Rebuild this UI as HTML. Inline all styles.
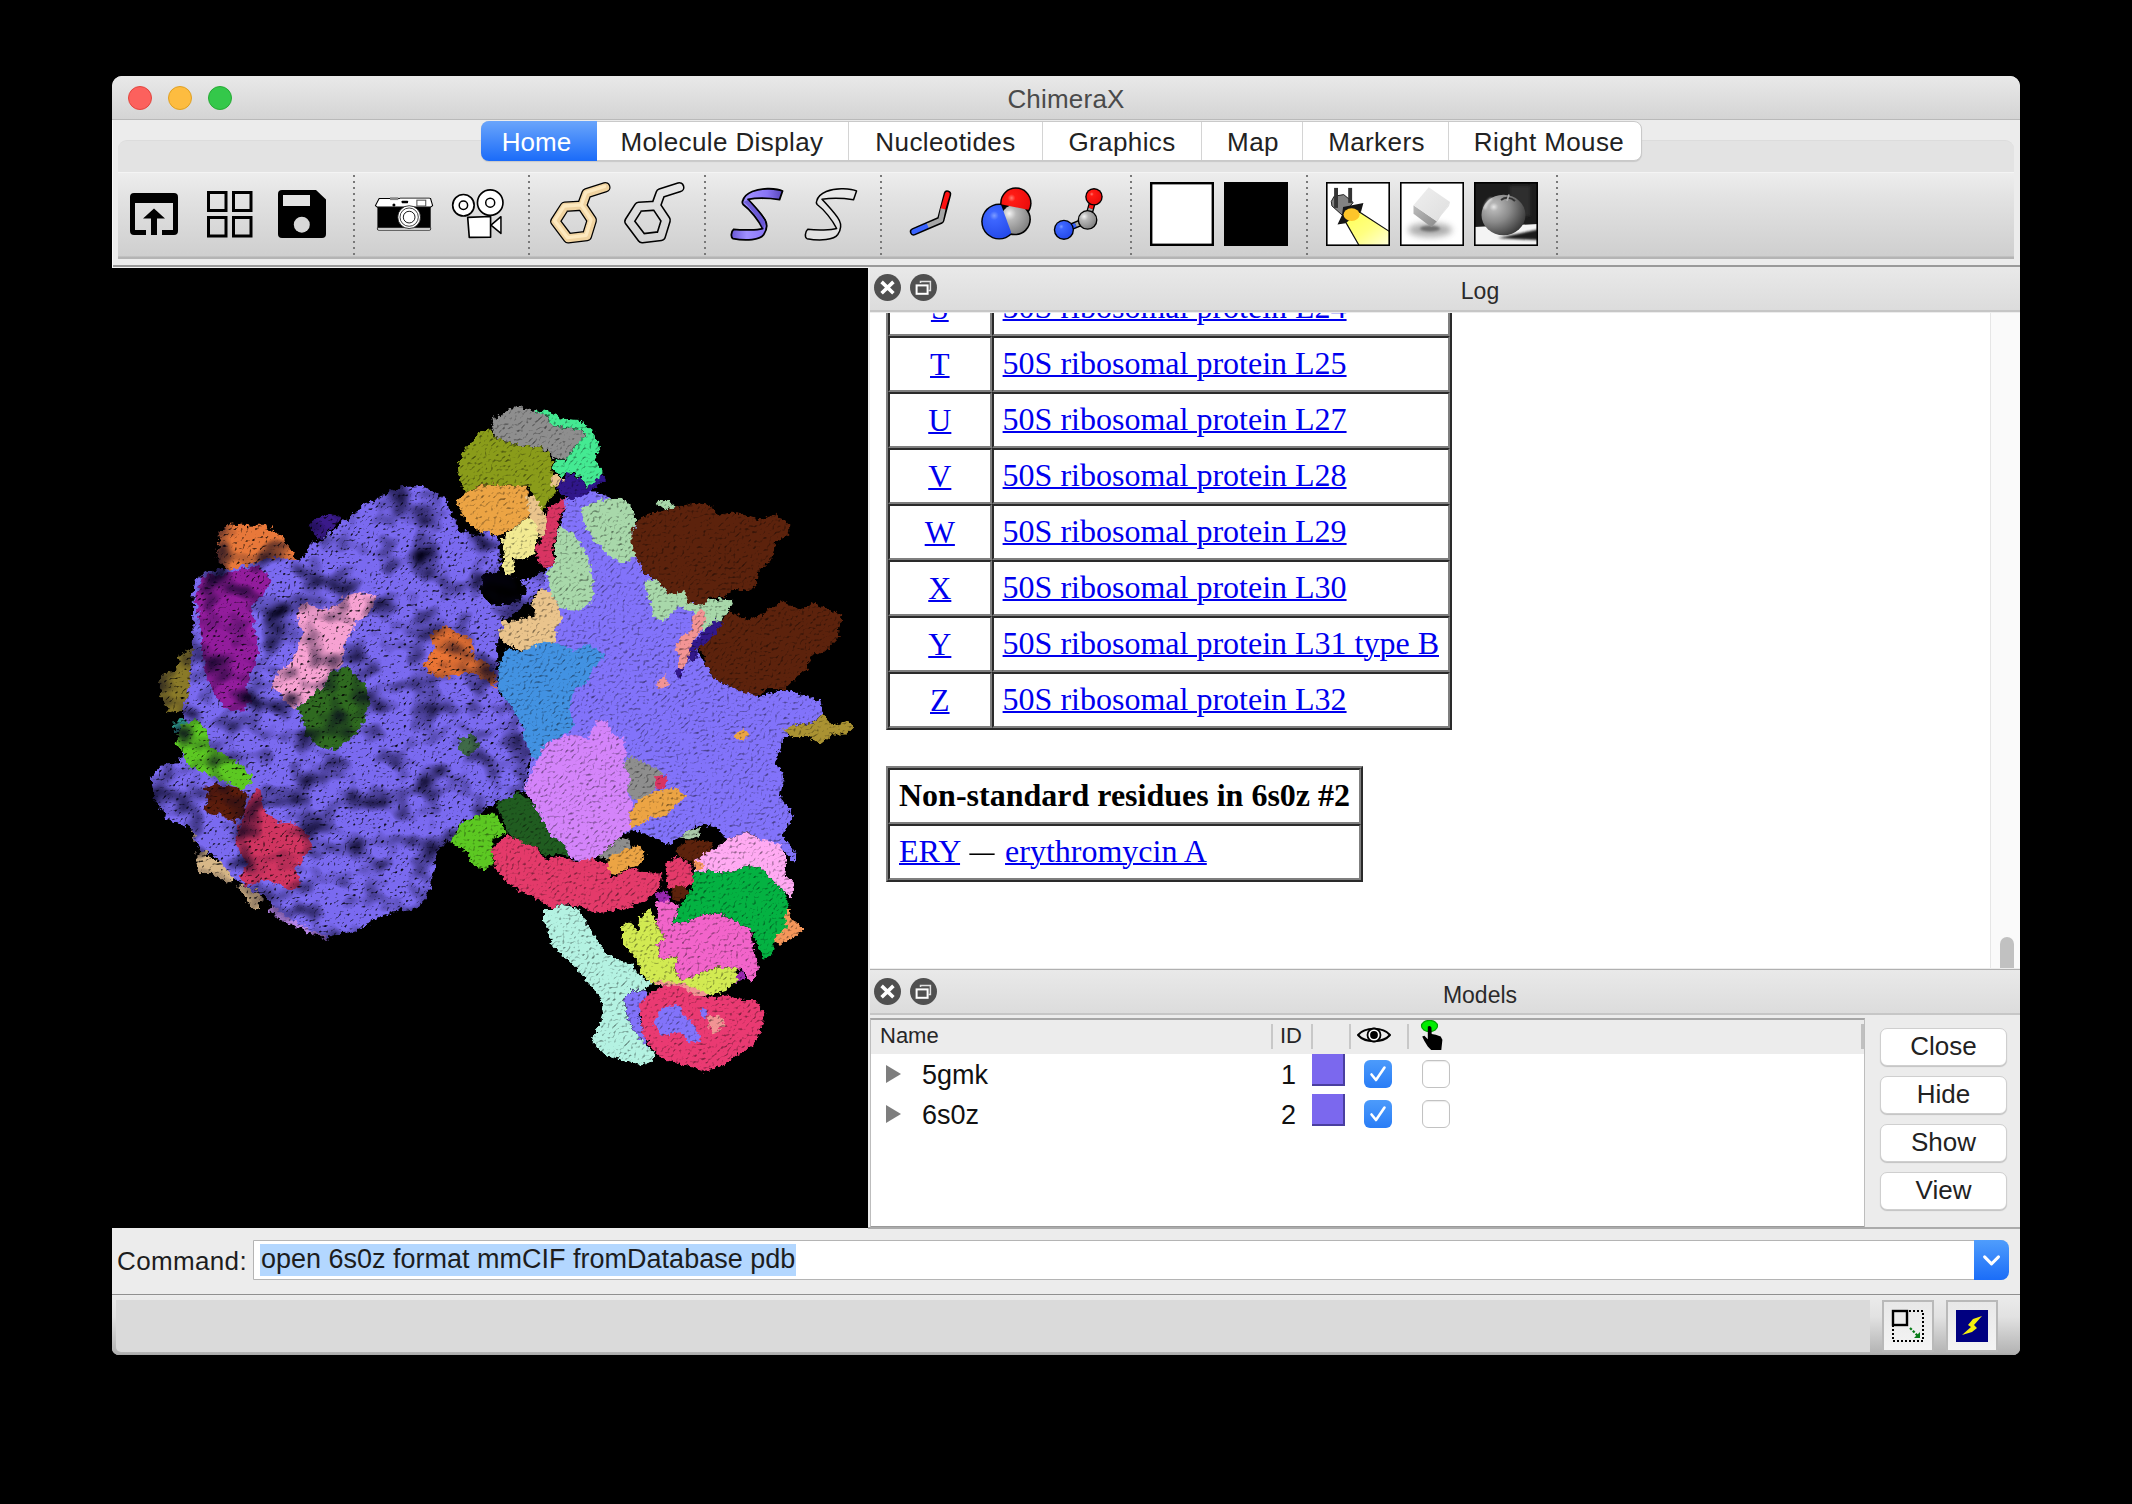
<!DOCTYPE html>
<html>
<head>
<meta charset="utf-8">
<title>ChimeraX</title>
<style>
svg{display:block}
*{box-sizing:border-box;margin:0;padding:0}
html,body{width:2132px;height:1504px;background:#000;overflow:hidden}
body{font-family:"Liberation Sans",sans-serif;position:relative;color:#1f1f1f}
.abs{position:absolute}
#win{position:absolute;left:112px;top:76px;width:1908px;height:1279px;background:#ececec;border-radius:10px 10px 7px 7px;overflow:hidden}
#titlebar{position:absolute;left:0;top:0;width:1908px;height:44px;background:linear-gradient(#e9e9e9,#d4d4d4);border-bottom:1px solid #b9b9b9}
#titlebar .t{position:absolute;left:0;width:1908px;top:8px;text-align:center;font-size:26px;color:#4a4a4a;letter-spacing:0.2px}
.tl{position:absolute;top:10px;width:24px;height:24px;border-radius:12px}
#tabpane{position:absolute;left:6px;top:64px;width:1896px;height:40px;background:#e3e3e3;border-radius:9px 9px 0 0;border-top:1px solid #dcdcdc}
#tabs{position:absolute;left:369px;top:45px;width:1161px;height:40px;background:#fff;border-radius:8px;border:1px solid #c9c9c9;box-shadow:0 1px 1px rgba(0,0,0,.12)}
.tab{position:absolute;top:0;height:38px;padding-top:1px;font-size:26px;letter-spacing:.4px;line-height:38px;text-align:center;color:#222;border-left:1px solid #d4d4d4;white-space:nowrap}
#toolbar{position:absolute;left:6px;top:96px;width:1896px;height:87px;background:linear-gradient(#ededed 0%,#e2e2e2 30%,#cfcfcf 96%,#b4b4b4 98%,#b4b4b4 100%);border-top:1px solid #f4f4f4}
.sep{position:absolute;top:2px;height:80px;width:2px;background:repeating-linear-gradient(#787878 0,#787878 2px,transparent 2px,transparent 6px)}
#gfx{position:absolute;left:0;top:192px;width:756px;height:960px;background:#000}
#right{position:absolute;left:758px;top:191px;width:1150px;height:962px;background:#ececec}
.dockbar{position:absolute;left:0;width:1150px;background:linear-gradient(#e9e9e9,#dcdcdc);border-bottom:2px solid #c6c6c6}
.dockbar .t{position:absolute;left:70px;width:1080px;text-align:center;font-size:23px;color:#2a2a2a}
.dbtn{position:absolute;width:27px;height:27px;border-radius:14px;background:#505050}
#log{position:absolute;left:0;top:46px;width:1150px;height:655px;background:#fff;overflow:hidden;font-family:"Liberation Serif",serif;font-size:32px;color:#000}
#log a{color:#0000ee;text-decoration:underline;text-decoration-thickness:2px}

#log table{position:absolute;border-collapse:separate;border-spacing:0;border:2px solid;border-color:#7f7f7f #2a2a2a #2a2a2a #7f7f7f;font-family:"Liberation Serif",serif;font-size:32px;color:#000;line-height:36px}
#log td,#log th{border:2px solid;border-color:#2a2a2a #7f7f7f #7f7f7f #2a2a2a;height:56px;padding:0 9px 2px 9px;white-space:nowrap;vertical-align:middle;text-align:left;font-size:32px}
#log td.c{text-align:center;padding:0}
#log th{font-weight:bold}
#sb{position:absolute;left:1120px;top:0;width:30px;height:655px;background:#fafafa;border-left:1px solid #e6e6e6}
#sb div{position:absolute;left:9px;top:624px;width:14px;height:40px;border-radius:7px;background:#c1c1c1}

#mtable{position:absolute;left:0px;top:751px;width:995px;height:210px;background:#fff;border:1px solid #bdbdbd;border-top:2px solid #a6a6a6;border-bottom:2px solid #9a9a9a;overflow:hidden}
#mhead{position:absolute;left:0;top:0;width:995px;height:34px;background:#ececec}
#mhead .h{position:absolute;top:3px;font-size:22px;color:#262626}
#mhead .v{position:absolute;top:4px;width:2px;height:25px;background:#c8c8c8}
.mrow{position:absolute;left:0;width:993px;height:40px;font-size:27px;color:#111}
.mrow .tri{position:absolute;left:15px;top:11px;width:0;height:0;border-left:15px solid #7e7e7e;border-top:9px solid transparent;border-bottom:9px solid transparent}
.mrow .n{position:absolute;left:51px;top:6px}
.mrow .i{position:absolute;left:410px;top:6px}
.mrow .sw{position:absolute;left:441px;top:0px;width:33px;height:32px;background:#7b68ee;border-right:2px solid #4a3fa0;border-bottom:2px solid #4a3fa0}
.cb{position:absolute;top:6px;width:28px;height:28px;border-radius:6px}
.cb.on{background:linear-gradient(#4c9bfb,#2a7df6)}
.cb.off{background:#fff;border:1px solid #c2c2c2;box-shadow:inset 0 1px 1px rgba(0,0,0,.08)}
.mbtn{position:absolute;left:1010px;width:127px;height:38px;background:#fff;border-radius:7px;border:1px solid #cfcfcf;box-shadow:0 1px 1px rgba(0,0,0,.18);font-size:26px;line-height:35px;text-align:center;color:#222}
#cmdlabel{position:absolute;left:5px;top:18px;font-size:26px;letter-spacing:.35px;color:#1d1d1d}
#cmdbox{position:absolute;left:141px;top:12px;width:1755px;height:40px;background:#fff;border:1px solid #b4b4b4;border-radius:0 7px 7px 0}
#cmdbox .sel{position:absolute;left:6px;top:3px;height:32px;background:#b3d7ff;font-size:27px;line-height:31px;color:#1d1d1d;white-space:nowrap;padding:0 1px}
#cmdbtn{position:absolute;left:1862px;top:12px;width:35px;height:40px;border-radius:0 8px 8px 0;background:linear-gradient(#4f9dfc,#1b6df8)}
#statusbar{position:absolute;left:4px;top:4px;width:1754px;height:52px;background:#dadada;border-radius:0 0 0 5px}
.sbtn{position:absolute;top:4px;width:52px;height:52px;background:linear-gradient(#e8e8e8,#f4f4f4);border:2px solid #b9b9b9}
#cmdrow{position:absolute;left:0;top:1152px;width:1908px;height:67px;background:#ececec;border-bottom:1px solid #8f8f8f}
#status{position:absolute;left:0;top:1220px;width:1908px;height:59px;background:linear-gradient(#ebebeb 0%,#e2e2e2 35%,#b4b4b4 96%,#a8a8a8 100%)}
</style>
</head>
<body>
<div id="win">
  <div class="abs" style="left:0;top:44px;width:1px;height:148px;background:#fafafa;z-index:5"></div>
  <div id="titlebar">
    <div class="tl" style="left:16px;background:#fc615d;border:1px solid #e2463f"></div>
    <div class="tl" style="left:56px;background:#fdbc40;border:1px solid #dfa023"></div>
    <div class="tl" style="left:96px;background:#34c84a;border:1px solid #27aa35"></div>
    <div class="t">ChimeraX</div>
  </div>
  <div id="tabpane"></div>
  <div id="tabs">
    <div class="tab" id="tabhome" style="left:-1px;width:116px;top:-1px;height:40px;line-height:40px;border-left:0;border-radius:8px 0 0 8px;background:linear-gradient(#6aa5fb,#1a6bf9);color:#fff;letter-spacing:0;padding-right:5px">Home</div>
    <div class="tab" style="left:114px;width:252px;border-left:0">Molecule Display</div>
    <div class="tab" style="left:366px;width:194px">Nucleotides</div>
    <div class="tab" style="left:560px;width:159px">Graphics</div>
    <div class="tab" style="left:719px;width:101px;padding-left:2px">Map</div>
    <div class="tab" style="left:820px;width:146px;padding-left:2px">Markers</div>
    <div class="tab" style="left:966px;width:193px;padding-left:8px">Right Mouse</div>
  </div>
  <div id="toolbar">
    <div class="sep" style="left:234.5px"></div>
    <div class="sep" style="left:410px"></div>
    <div class="sep" style="left:586px"></div>
    <div class="sep" style="left:762px"></div>
    <div class="sep" style="left:1012px"></div>
    <div class="sep" style="left:1188px"></div>
    <div class="sep" style="left:1438px"></div>
    
  </div>
<svg id="icons" style="position:absolute;left:-112px;top:-76px" width="2132" height="300" viewBox="0 0 2132 300">
<defs>
<linearGradient id="tbg" gradientUnits="userSpaceOnUse" x1="0" y1="172" x2="0" y2="258"><stop offset="0" stop-color="#ededed"/><stop offset=".3" stop-color="#e2e2e2"/><stop offset="1" stop-color="#cecece"/></linearGradient>
<linearGradient id="tbg2" gradientUnits="userSpaceOnUse" x1="0" y1="-53" x2="0" y2="1093"><stop offset="0" stop-color="#ededed"/><stop offset=".3" stop-color="#e2e2e2"/><stop offset="1" stop-color="#cecece"/></linearGradient>
<linearGradient id="purp" x1="0" y1="0" x2="1" y2="0"><stop offset="0" stop-color="#6a58d8"/><stop offset=".3" stop-color="#a090ff"/><stop offset=".7" stop-color="#8874f6"/><stop offset="1" stop-color="#5746b8"/></linearGradient>
<radialGradient id="gblue" cx=".35" cy=".32" r=".75"><stop offset="0" stop-color="#7d9dff"/><stop offset=".18" stop-color="#3d66ff"/><stop offset="1" stop-color="#2348e8"/></radialGradient>
<radialGradient id="gred" cx=".35" cy=".32" r=".75"><stop offset="0" stop-color="#ff7a70"/><stop offset=".18" stop-color="#ff1a14"/><stop offset="1" stop-color="#e80a0a"/></radialGradient>
<radialGradient id="ggray" cx=".3" cy=".3" r=".8"><stop offset="0" stop-color="#f4f4f4"/><stop offset=".3" stop-color="#b8b8b8"/><stop offset="1" stop-color="#7e7e7e"/></radialGradient>
<linearGradient id="beam" x1="0" y1="0" x2="1" y2="1"><stop offset="0" stop-color="#ffff55"/><stop offset=".5" stop-color="#ffff80"/><stop offset="1" stop-color="#ffffe0"/></linearGradient>
<linearGradient id="cubetop" x1="0" y1="0" x2="1" y2="1"><stop offset="0" stop-color="#efefef"/><stop offset="1" stop-color="#dedede"/></linearGradient>
<linearGradient id="cubeside" x1="0" y1="0" x2="1" y2="1"><stop offset="0" stop-color="#bdbdbd"/><stop offset="1" stop-color="#8a8a8a"/></linearGradient>
<radialGradient id="apple" cx=".28" cy=".3" r=".85"><stop offset="0" stop-color="#e6e6e6"/><stop offset=".12" stop-color="#b4b4b4"/><stop offset=".45" stop-color="#8a8a8a"/><stop offset=".8" stop-color="#4e4e4e"/><stop offset="1" stop-color="#2c2c2c"/></radialGradient>
<filter id="blur3" x="-50%" y="-50%" width="200%" height="200%"><feGaussianBlur stdDeviation="3"/></filter>
<filter id="blur1" x="-50%" y="-50%" width="200%" height="200%"><feGaussianBlur stdDeviation="1.2"/></filter>
<clipPath id="c64"><rect x="0" y="0" width="64" height="64"/></clipPath>
<clipPath id="clipred"><polygon points="970,100 1270,100 1270,308 985,250"/></clipPath>
<clipPath id="clipblue"><polygon points="790,230 985,250 1078,505 1060,600 790,600"/></clipPath>
</defs>
<!-- open -->
<g fill="#000">
<path d="M134 193 H174 a4 4 0 0 1 4 4 V231 a4 4 0 0 1 -4 4 H162 V230 H173 V203 H135 V230 H146 V235 H134 a4 4 0 0 1 -4 -4 V197 a4 4 0 0 1 4 -4 Z"/>
<path d="M154 208.5 L165 218.6 H157 V235 H151 V218.6 H143 Z"/>
</g>
<!-- grid -->
<g fill="none" stroke="#000" stroke-width="3">
<rect x="208.5" y="192.5" width="17.5" height="18"/><rect x="233.5" y="192.5" width="17.5" height="18"/>
<rect x="208.5" y="217.5" width="17.5" height="18.5"/><rect x="233.5" y="217.5" width="17.5" height="18.5"/>
</g>
<!-- save -->
<path d="M282 190 H316 L326 199.5 V234 a4 4 0 0 1 -4 4 H282 a4 4 0 0 1 -4 -4 V194 a4 4 0 0 1 4 -4 Z" fill="#000"/>
<rect x="283" y="195" width="27" height="11" fill="#e4e4e4"/>
<circle cx="301.8" cy="224.7" r="8" fill="#d8d8d8"/>
<!-- camera -->
<g transform="translate(360,176) scale(0.07505)">
<path d="M205 395 L255 300 L940 300 L968 395 L940 415 L230 415 Z" fill="#fff" stroke="#000" stroke-width="14" stroke-linejoin="round"/>
<rect x="400" y="283" width="110" height="38" fill="#8a8a8a"/>
<rect x="530" y="283" width="400" height="22" fill="#8a8a8a"/>
<rect x="232" y="415" width="710" height="275" fill="#000"/>
<path d="M232 690 H942 V705 a20 20 0 0 1 -20 20 H252 a20 20 0 0 1 -20 -20 Z" fill="#fff" stroke="#000" stroke-width="10"/>
<path d="M240 722 H935" stroke="#777" stroke-width="12"/>
<circle cx="452" cy="385" r="20" fill="#000"/>
<rect x="555" y="330" width="85" height="32" rx="8" fill="#000"/>
<rect x="758" y="322" width="118" height="78" fill="#fff" stroke="#555" stroke-width="14"/>
<circle cx="655" cy="548" r="152" fill="#fff" stroke="#000" stroke-width="10"/>
<circle cx="655" cy="548" r="122" fill="#fff" stroke="#000" stroke-width="10"/>
<circle cx="655" cy="548" r="78" fill="#fff" stroke="#000" stroke-width="12"/>
</g>
<!-- movie -->
<g transform="translate(360,176) scale(0.07505)" stroke="#000" fill="#fff">
<polygon points="1745,655 1878,542 1878,765" stroke-width="20" stroke-linejoin="round"/>
<polygon points="1435,552 1740,540 1740,815 1456,818" stroke-width="22" stroke-linejoin="round"/>
<circle cx="1378" cy="390" r="143" stroke-width="22"/>
<circle cx="1378" cy="390" r="56" stroke-width="20"/>
<circle cx="1735" cy="355" r="170" stroke-width="22"/>
<circle cx="1735" cy="355" r="60" stroke-width="20"/>
</g>
<!-- benzene tan -->
<g transform="translate(540,176) scale(0.07505)" fill="none" stroke-linejoin="round" stroke-linecap="round">
<path d="M560 395 L330 410 L205 605 L375 830 L625 800 L690 590 Z M560 395 L620 230 L870 150" stroke="#000" stroke-width="140"/>
<path d="M560 395 L330 410 L205 605 L375 830 L625 800 L690 590 Z M560 395 L620 230 L870 150" stroke="#f0d3a0" stroke-width="106"/>
<path d="M560 395 L330 410 L205 605 L375 830 L625 800 L690 590 Z M560 395 L620 230 L870 150" stroke="#ffecc4" stroke-width="44" opacity=".85" transform="translate(-10,-10)"/>
</g>
<!-- benzene outline -->
<g transform="translate(614,176) scale(0.07505)" fill="none" stroke-linejoin="round" stroke-linecap="round">
<path d="M560 395 L330 410 L205 605 L375 830 L625 800 L690 590 Z M560 395 L620 230 L870 150" stroke="#000" stroke-width="140"/>
</g>
<g transform="translate(614,176) scale(0.07505)" fill="none" stroke-linejoin="round" stroke-linecap="round">
<path d="M560 395 L330 410 L205 605 L375 830 L625 800 L690 590 Z M560 395 L620 230 L870 150" stroke="url(#tbg2)" stroke-width="98"/>
</g>
<!-- ribbon purple -->
<g transform="translate(715,176) scale(0.07505)">
<path id="rib" d="M370 330 C400 220 560 165 720 170 C800 172 870 185 900 200 L860 315 C760 300 560 290 440 310 C520 400 620 500 670 590 C700 650 690 720 650 780 C600 850 420 870 240 835 C205 820 215 740 250 710 C380 725 560 720 635 700 C580 590 470 450 375 380 C360 360 362 345 370 330 Z" fill="url(#purp)" stroke="#000" stroke-width="24" stroke-linejoin="round"/>
<path d="M385 345 C470 420 580 560 640 700 C660 680 670 640 660 600 C610 500 520 400 440 318 Z" fill="#5a48c4" opacity=".7"/>
<path d="M440 310 C520 400 620 500 670 590 C690 630 692 670 680 710" fill="none" stroke="#000" stroke-width="14"/>
</g>
<!-- ribbon outline -->
<g transform="translate(789,176) scale(0.07505)">
<path d="M370 330 C400 220 560 165 720 170 C800 172 870 185 900 200 L860 315 C760 300 560 290 440 310 C520 400 620 500 670 590 C700 650 690 720 650 780 C600 850 420 870 240 835 C205 820 215 740 250 710 C380 725 560 720 635 700 C580 590 470 450 375 380 C360 360 362 345 370 330 Z" fill="#ebebeb" fill-opacity=".55" stroke="#000" stroke-width="20" stroke-linejoin="round"/>
</g>
<!-- stick -->
<g transform="translate(890,176) scale(0.11257)" fill="none" stroke-linecap="round" stroke-linejoin="round">
<path d="M210 495 L450 392 L510 162" stroke="#000" stroke-width="68"/>
<path d="M210 495 L335 441" stroke="#3a64ff" stroke-width="42"/>
<path d="M470 295 L510 162" stroke="#ff1212" stroke-width="42"/>
<path d="M335 441 L450 392 L472 292" stroke="#a6a6a6" stroke-width="42" stroke-linecap="butt"/>
</g>
<!-- spheres -->
<g transform="translate(890,176) scale(0.11257)">
<circle cx="1118" cy="241" r="140" fill="#000"/><circle cx="970" cy="405" r="160" fill="#000"/><circle cx="1110" cy="385" r="142" fill="#000"/>
<circle cx="1110" cy="385" r="128" fill="url(#ggray)"/>
<g clip-path="url(#clipred)"><circle cx="1118" cy="241" r="127" fill="url(#gred)"/></g>
<g clip-path="url(#clipblue)"><circle cx="970" cy="405" r="147" fill="url(#gblue)"/></g>
</g>
<!-- ball stick -->
<g transform="translate(890,176) scale(0.11257)">
<path d="M1545 478 L1755 390 L1812 185" fill="none" stroke="#000" stroke-width="62"/>
<path d="M1545 478 L1650 434" stroke="#3a64ff" stroke-width="38"/><path d="M1650 434 L1755 390 L1783 288" stroke="#a6a6a6" stroke-width="38" fill="none"/><path d="M1783 288 L1812 185" stroke="#ff1212" stroke-width="38"/>
<circle cx="1545" cy="478" r="90" fill="#000"/><circle cx="1545" cy="478" r="78" fill="url(#gblue)"/>
<circle cx="1755" cy="390" r="88" fill="#000"/><circle cx="1755" cy="390" r="76" fill="url(#ggray)"/>
<circle cx="1812" cy="185" r="78" fill="#000"/><circle cx="1812" cy="185" r="66" fill="url(#gred)"/>
</g>
<!-- white / black squares -->
<rect x="1151.2" y="183.2" width="61.6" height="61.6" fill="#fff" stroke="#000" stroke-width="2.4"/>
<rect x="1224" y="182" width="64" height="64" fill="#000"/>
<!-- spotlight -->
<g transform="translate(1326,182)">
<rect x="0" y="0" width="64" height="64" fill="#fff"/>
<g clip-path="url(#c64)">
<polygon points="19.4,39.6 33.4,30 65,50.5 65,64 33.4,64" fill="url(#beam)" stroke="#111" stroke-width="1.2"/>
<polygon points="5.3,19.4 8.1,14.3 17.7,12.6 27.2,20.5 16.5,33.4 5.9,23.9" fill="#828282" stroke="#222" stroke-width="1" stroke-linejoin="round"/>
<rect x="8.1" y="5.9" width="3.9" height="20" fill="#333"/><rect x="22.2" y="5.9" width="3.9" height="15" fill="#333"/>
<polygon points="17.1,25 37.4,21 35.1,29.5 19.4,41.3 11.5,42.4 16,32.9" fill="#161616"/>
<ellipse cx="25.6" cy="32.6" rx="8.1" ry="6.3" fill="#fdc52a"/>
</g>
<rect x=".8" y=".8" width="62.4" height="62.4" fill="none" stroke="#000" stroke-width="1.6"/>
</g>
<!-- soft cube -->
<g transform="translate(1400,182)">
<rect x="0" y="0" width="64" height="64" fill="#fff"/>
<g clip-path="url(#c64)">
<ellipse cx="30" cy="48" rx="22" ry="7" fill="#6a6a6a" opacity=".55" filter="url(#blur3)"/>
<ellipse cx="30" cy="46.5" rx="10" ry="3" fill="#444" opacity=".6" filter="url(#blur1)"/>
<polygon points="13.5,23.3 37.1,39.6 31.5,45.3 13.5,31.7" fill="url(#cubeside)"/>
<polygon points="28.7,5.3 50.1,19.9 37.1,39.6 13.5,23.3" fill="url(#cubetop)"/>
<polygon points="37.1,39.6 50.1,19.9 49,24 31.5,45.3" fill="#d2d2d2" opacity=".6"/>
</g>
<rect x=".8" y=".8" width="62.4" height="62.4" fill="none" stroke="#000" stroke-width="1.6"/>
</g>
<!-- apple -->
<g transform="translate(1474,182)">
<rect x="0" y="0" width="64" height="64" fill="#1c1c1c"/>
<g clip-path="url(#c64)">
<rect x="36" y="4" width="20" height="30" fill="#2e2e2e" filter="url(#blur1)"/>
<polygon points="0,45 64,42 64,64 0,64" fill="#f4f4f4"/>
<polygon points="24,56 64,47.5 64,58 40,57" fill="#1e1e1e" filter="url(#blur1)"/>
<ellipse cx="29.5" cy="33" rx="22" ry="20.3" fill="url(#apple)"/>
<path d="M27 18 C31 15 37 15 41 19" stroke="#333" stroke-width="2" fill="none"/>
<path d="M33 19 L35 12.5" stroke="#b0b0b0" stroke-width="1.6"/>
<path d="M11 26 C12 22 14 19 17 17" stroke="#f2f2f2" stroke-width="2.4" fill="none" stroke-linecap="round" opacity=".8" filter="url(#blur1)"/>
</g>
<rect x=".8" y=".8" width="62.4" height="62.4" fill="none" stroke="#000" stroke-width="1.6"/>
</g>
</svg>

  <div class="abs" style="left:0;top:183px;width:1908px;height:6px;background:#ececec"></div>
  <div class="abs" style="left:0;top:189px;width:1908px;height:2px;background:#9a9a9a"></div><div class="abs" style="left:0;top:191px;width:1908px;height:1px;background:#f2f2f2"></div>
  <div id="gfx"><!--MOLSTART--><svg id="mol" style="position:absolute;left:0;top:0" width="756" height="960" viewBox="0 -233.9 1579 2005.06">
<defs>
<filter id="fL" x="-5%" y="-5%" width="110%" height="110%" color-interpolation-filters="sRGB">
<feTurbulence type="fractalNoise" baseFrequency="0.09" numOctaves="2" seed="7" result="n1"/>
<feDisplacementMap in="SourceGraphic" in2="n1" scale="20" xChannelSelector="R" yChannelSelector="G" result="d"/>
<feTurbulence type="fractalNoise" baseFrequency="0.17" numOctaves="1" seed="3" result="n2"/>
<feDiffuseLighting in="n2" surfaceScale="6.5" diffuseConstant="2.0" lighting-color="#ffffff" result="lt"><feDistantLight azimuth="235" elevation="52"/></feDiffuseLighting>
<feTurbulence type="fractalNoise" baseFrequency="0.016 0.02" numOctaves="2" seed="4" result="n3"/>
<feColorMatrix in="n3" type="matrix" values="0 0 0 0 0  0 0 0 0 0  0 0 0 0 0  -2.3 0 0 0 1.27" result="sh"/>
<feFlood flood-color="#05031c" result="fl"/>
<feComposite in="fl" in2="sh" operator="in" result="shade"/>
<feComposite in="d" in2="lt" operator="arithmetic" k1="1" k2="0" k3="0" k4="0" result="lit"/>
<feMerge result="m"><feMergeNode in="lit"/><feMergeNode in="shade"/></feMerge>
<feComposite in="m" in2="d" operator="in"/>
</filter>
<filter id="fR" x="-5%" y="-5%" width="110%" height="110%" color-interpolation-filters="sRGB">
<feTurbulence type="fractalNoise" baseFrequency="0.12" numOctaves="2" seed="11" result="n1"/>
<feDisplacementMap in="SourceGraphic" in2="n1" scale="15" xChannelSelector="R" yChannelSelector="G" result="d"/>
<feTurbulence type="fractalNoise" baseFrequency="0.16" numOctaves="1" seed="5" result="n2"/>
<feDiffuseLighting in="n2" surfaceScale="4.5" diffuseConstant="1.3" lighting-color="#ffffff" result="lt"><feDistantLight azimuth="235" elevation="62"/></feDiffuseLighting>
<feComposite in="d" in2="lt" operator="arithmetic" k1="1" k2="0" k3="0" k4="0" result="lit"/>
<feComposite in="lit" in2="d" operator="in"/>
</filter>
</defs>
<g filter="url(#fR)">
<polygon fill="#8273fa" points="940,250 990,226 1040,244 1085,266 1095,300 1090,350 1110,401 1135,416 1165,446 1205,466 1235,471 1260,501 1245,531 1220,561 1240,596 1260,626 1305,646 1350,661 1405,646 1435,656 1480,671 1485,696 1465,716 1425,721 1400,755 1385,800 1405,825 1395,870 1425,910 1400,950 1430,990 1425,1010 1405,985 1355,960 1325,945 1285,960 1262,935 1230,928 1205,940 1185,955 1165,972 1135,958 1105,945 1085,940 1060,955 1015,995 985,1010 955,995 915,950 880,885 860,855 875,790 880,700 870,640 870,560 885,500 895,450 905,393 925,381 930,321 945,270"/>
<polygon fill="#8e8e8e" points="792,83 845,53 905,71 920,96 980,103 990,113 965,143 950,166 920,161 900,141 850,136 800,121"/>
<polygon fill="#44ea92" points="880,68 905,63 945,81 975,83 1005,106 1020,141 1010,166 1025,191 1020,216 990,226 985,211 962,193 940,201 920,186 925,166 950,166 965,143 990,113 980,103 920,96 905,71"/>
<polygon fill="#8a9c1a" points="722,181 735,146 770,106 792,101 800,121 850,136 900,141 920,166 920,191 930,231 905,261 895,286 885,261 870,221 825,221 775,216 740,236 725,211"/>
<polygon fill="#30168a" points="930,221 955,191 985,211 990,226 1025,196 1030,210 985,241 955,251 935,236"/>
<polygon fill="#eca444" points="720,251 740,236 775,216 825,221 865,221 877,256 870,286 835,311 805,326 765,316 735,291"/>
<polygon fill="#eac48c" points="865,241 885,246 905,281 920,301 915,341 900,331 885,321 875,306 870,271"/>
<polygon fill="#eac48c" points="920,196 945,206 930,221 915,221"/>
<polygon fill="#f2ea92" points="812,331 835,311 870,286 885,301 890,331 880,366 855,376 838,371 842,401 825,411 815,391 820,361"/>
<polygon fill="#d83462" points="910,266 945,248 950,261 935,286 930,321 920,351 925,381 905,393 890,381 885,351 905,321"/>
<polygon fill="#a8d8aa" points="980,265 1035,246 1065,246 1085,266 1095,296 1085,321 1095,371 1065,381 1035,366 1005,331 985,301"/>
<polygon fill="#a8d8aa" points="935,306 965,321 995,371 1005,421 1005,461 975,481 935,476 915,441 910,401 925,381 925,341"/>
<polygon fill="#a8d8aa" points="1110,421 1135,416 1165,446 1200,436 1215,471 1250,456 1300,461 1280,491 1260,521 1235,526 1225,491 1185,471 1150,506 1130,491 1120,451"/>
<polygon fill="#a8d8aa" points="1137,256 1160,251 1180,266 1155,271"/>
<polygon fill="#5c220c" points="1085,316 1105,286 1135,276 1180,266 1215,256 1250,261 1265,281 1300,276 1350,291 1385,281 1415,301 1415,321 1385,341 1380,371 1350,401 1345,431 1325,441 1300,436 1275,456 1250,451 1235,471 1205,466 1195,441 1165,446 1135,416 1110,401 1095,371 1085,341"/>
<polygon fill="#5c220c" points="1220,561 1245,531 1275,501 1290,481 1325,501 1355,491 1400,461 1435,481 1465,466 1525,491 1515,541 1485,571 1465,571 1450,606 1425,626 1405,646 1365,646 1345,661 1305,646 1260,626 1240,596 1235,571"/>
<polygon fill="#32188c" points="1235,526 1260,501 1275,506 1260,531 1240,551 1220,561 1225,581 1200,586 1185,626 1177,611 1195,571 1210,551"/>
<polygon fill="#f29494" points="1215,491 1235,478 1242,501 1225,531 1210,551 1205,576 1195,601 1180,606 1185,576 1175,566 1190,536 1210,521"/>
<polygon fill="#f29494" points="1135,636 1155,616 1162,636 1145,646"/>
<polygon fill="#eac48c" points="875,461 895,436 915,441 935,476 940,501 925,521 930,546 900,556 860,566 820,551 802,526 805,506 850,501 885,491"/>
<polygon fill="#4292e2" points="825,561 860,566 900,546 935,551 965,566 995,551 1030,576 1005,601 990,636 965,646 955,686 965,721 945,741 905,760 890,790 875,790 860,773 855,721 835,686 805,646 805,601"/>
<polygon fill="#d484fa" points="905,760 955,740 995,750 1010,715 1035,710 1045,740 1070,750 1075,785 1065,800 1085,830 1075,860 1090,885 1080,910 1085,935 1060,955 1035,980 1015,995 985,1010 955,995 945,970 915,950 900,920 880,885 860,855 875,820 890,790"/>
<polygon fill="#8e8e8e" points="1065,800 1085,785 1110,800 1135,810 1150,820 1135,850 1115,875 1095,880 1075,860 1085,830"/>
<polygon fill="#8e8e8e" points="1015,995 1035,980 1060,955 1080,960 1085,980 1115,990 1105,1000 1080,995 1045,1005"/>
<polygon fill="#d83462" points="1135,830 1160,825 1155,850 1135,855"/>
<polygon fill="#eca444" points="1080,910 1100,875 1135,860 1180,850 1200,870 1175,890 1160,910 1125,915 1100,930 1085,935"/>
<polygon fill="#eca444" points="1035,995 1065,985 1100,970 1115,990 1100,1015 1075,1020 1055,1035 1035,1030"/>
<polygon fill="#205c20" points="800,885 850,860 880,885 900,920 915,950 945,970 955,995 935,990 905,995 885,975 850,965 825,945 815,915"/>
<polygon fill="#5cc822" points="705,965 730,925 760,910 800,905 825,945 795,960 795,1010 780,1025 750,1010 745,990"/>
<polygon fill="#e43a6a" points="792,980 825,950 855,965 885,975 905,1000 935,995 965,1005 1005,1000 1035,1010 1045,1040 1080,1020 1125,1030 1150,1030 1145,1060 1120,1085 1085,1100 1045,1110 1010,1115 980,1100 945,1095 920,1105 890,1085 855,1070 825,1050 800,1020"/>
<polygon fill="#e43a6a" points="1155,1010 1180,995 1210,1010 1215,1050 1185,1070 1160,1060"/>
<polygon fill="#5c220c" points="1175,980 1205,960 1255,965 1250,990 1215,1010 1185,995"/>
<polygon fill="#5c220c" points="1170,1060 1195,1055 1205,1070 1185,1090 1170,1085"/>
<polygon fill="#a8c8a8" points="1185,955 1205,940 1230,935 1230,950 1205,960"/>
<polygon fill="#ffaaf2" points="1230,995 1255,980 1285,960 1325,945 1355,960 1395,970 1410,1000 1405,1030 1425,1050 1420,1085 1405,1070 1385,1050 1355,1020 1325,1015 1285,1030 1250,1025 1215,1030 1215,1010"/>
<polygon fill="#f4965a" points="1215,1010 1230,1005 1235,1020 1217,1025"/>
<polygon fill="#f4965a" points="1375,1110 1415,1105 1420,1125 1445,1150 1425,1165 1395,1180 1380,1170 1385,1150"/>
<polygon fill="#9a28b0" points="1135,1070 1155,1065 1170,1090 1140,1095"/>
<polygon fill="#f264ca" points="1135,1090 1165,1090 1185,1100 1170,1135 1205,1130 1235,1115 1270,1115 1305,1130 1335,1150 1340,1185 1350,1230 1335,1260 1320,1235 1305,1230 1265,1225 1230,1240 1190,1255 1175,1230 1180,1205 1145,1210 1140,1180 1155,1165 1135,1135 1140,1110"/>
<polygon fill="#04b242" points="1170,1135 1185,1100 1210,1060 1215,1030 1250,1025 1285,1030 1325,1015 1355,1020 1385,1050 1405,1070 1415,1100 1405,1120 1410,1145 1385,1160 1380,1200 1360,1210 1350,1180 1335,1150 1305,1130 1270,1115 1235,1115 1205,1130"/>
<polygon fill="#9a28b0" points="1295,1250 1320,1230 1320,1250 1300,1260"/>
<polygon fill="#d2ea52" points="1065,1140 1080,1130 1100,1155 1100,1125 1125,1100 1135,1135 1155,1165 1140,1180 1145,1210 1180,1205 1175,1230 1190,1255 1230,1240 1265,1225 1305,1230 1305,1255 1285,1275 1250,1285 1215,1280 1190,1260 1155,1265 1125,1260 1105,1240 1095,1210 1070,1180 1065,1160"/>
<polygon fill="#b4f2e2" points="900,1105 920,1105 945,1095 975,1105 995,1140 1015,1170 1030,1195 1055,1210 1085,1220 1100,1240 1125,1260 1115,1275 1085,1275 1070,1290 1075,1325 1090,1360 1110,1385 1135,1405 1125,1425 1100,1430 1065,1420 1030,1410 1000,1380 1015,1355 1025,1320 1020,1290 995,1260 970,1230 945,1205 920,1185 910,1150 900,1130"/>
<polygon fill="#8273fa" points="1070,1290 1085,1275 1115,1275 1125,1290 1100,1325 1110,1360 1120,1395 1110,1385 1090,1360 1075,1325"/>
<polygon fill="#f29494" points="1125,1255 1190,1260 1250,1285 1215,1290 1160,1272"/>
<polygon fill="#ea3a72" points="1100,1305 1125,1280 1155,1265 1190,1265 1215,1285 1250,1290 1285,1285 1320,1295 1345,1295 1365,1325 1355,1360 1340,1390 1305,1410 1280,1430 1235,1445 1195,1430 1155,1420 1135,1405 1110,1370 1105,1335"/>
<polygon fill="#8273fa" points="1130,1345 1150,1310 1185,1305 1190,1325 1215,1345 1230,1380 1210,1385 1185,1360 1150,1370"/>
<polygon fill="#8273fa" points="1230,1310 1245,1315 1240,1335 1230,1330"/>
<polygon fill="#f29494" points="1240,1330 1270,1325 1280,1350 1255,1365"/>
<polygon fill="#aa9232" points="1400,731 1425,721 1465,716 1485,696 1505,721 1535,711 1550,726 1535,741 1505,741 1480,761 1455,746 1420,746"/>
<polygon fill="#eca444" points="1300,741 1320,729 1332,744 1310,756"/>
</g>
<g filter="url(#fL)">
<polygon fill="#e8783a" points="218,374 223,319 248,299 293,304 323,304 358,329 378,359 393,380 358,385 323,390 273,395 248,398"/>
<polygon fill="#3a1a8a" points="413,299 448,279 483,284 468,304 438,334 423,325"/>
<polygon fill="#8a7a28" points="98,634 108,614 133,604 143,569 170,561 190,579 192,599 180,624 170,659 165,694 118,694 106,674"/>
<polygon fill="#30a090" points="123,729 143,704 172,701 165,724 133,734"/>
<polygon fill="#d8b888" points="166,940 203,937 223,955 218,975 188,970 168,955"/>
<polygon fill="#d8b888" points="176,990 193,980 213,1005 243,1010 258,1035 243,1050 208,1030 183,1030 176,1010"/>
<polygon fill="#d8b888" points="263,1055 283,1060 308,1070 313,1085 298,1110 288,1100 278,1080"/>
<polygon fill="#b684e4" points="328,1105 353,1090 378,1110 398,1135 428,1145 458,1155 448,1170 408,1152 368,1137 338,1120"/>
<polygon fill="#7a6af0" points="598,224 648,221 698,249 723,309 758,324 790,318 810,341 810,401 860,421 900,401 905,421 875,461 820,500 805,540 805,600 805,646 835,686 855,721 875,790 860,855 800,885 760,910 730,925 708,960 688,970 678,990 668,1050 658,1080 633,1105 588,1110 548,1125 518,1150 483,1155 448,1165 408,1145 368,1125 338,1100 308,1070 268,1055 253,1035 208,990 183,980 168,940 148,930 113,915 88,875 81,830 103,805 138,800 158,760 150,700 160,640 165,590 170,520 168,450 175,415 200,400 260,392 330,372 395,374 420,335 438,334 473,304 508,274 538,254"/>
<polygon fill="#000000" points="775,410 812,398 850,418 868,440 840,468 795,472 768,445"/>
<polygon fill="#5cc822" points="133,760 143,720 178,710 198,735 208,770 248,790 278,810 293,840 273,855 248,845 223,835 193,820 158,805 148,775"/>
<polygon fill="#921c9c" points="173,454 188,409 223,409 273,394 308,389 333,419 313,449 293,474 298,519 308,569 293,609 278,644 293,669 278,689 248,694 223,669 198,624 188,569 183,509"/>
<polygon fill="#f7a2d2" points="388,479 403,464 433,479 473,474 483,454 523,444 551,454 538,489 513,504 498,529 483,559 483,594 458,609 443,639 408,669 378,684 358,669 353,649 331,644 343,614 373,594 388,559 398,529 388,504"/>
<polygon fill="#2f6a20" points="383,684 408,669 443,639 458,609 493,599 528,634 538,674 523,719 498,749 468,774 428,764 403,739 398,709"/>
<polygon fill="#ea7434" points="653,594 673,559 663,529 698,514 723,529 748,539 758,579 778,589 798,609 803,644 778,624 758,614 723,614 688,624 663,614"/>
<polygon fill="#5a1c0c" points="193,850 223,845 258,850 283,865 278,900 258,925 228,910 193,900 201,875"/>
<polygon fill="#d03460" points="278,900 298,855 313,860 318,900 343,920 378,925 408,945 418,970 398,1000 383,1020 393,1055 373,1065 343,1050 308,1045 278,1060 268,1035 283,1010 268,990 258,955 268,925"/>
<polygon fill="#3f6a48" points="725,750 755,740 770,765 745,785 722,775"/>
</g>
</svg><!--MOLEND--></div>
  <div id="right">
    <div class="dockbar" style="top:0;height:45px">
      <div class="dbtn" style="left:4px;top:7px"><svg width="27" height="27" viewBox="0 0 27 27"><path d="M7.6 7.9 L19.4 19.3 M19.4 7.9 L7.6 19.3" stroke="#fff" stroke-width="3.6" stroke-linecap="butt"/></svg></div>
      <div class="dbtn" style="left:40px;top:7px"><svg width="27" height="27" viewBox="0 0 27 27"><path d="M10.5 9 V7.6 H20.4 V16.6 H18.6" fill="none" stroke="#e0e0e0" stroke-width="1.5"/><rect x="6.6" y="11.4" width="11" height="8.4" fill="none" stroke="#fff" stroke-width="2"/></svg></div>
      <div class="t" style="top:11px">Log</div>
    </div>
    <div id="log"><table id="t1" style="left:16px;top:-35px;width:566px"><tr><td class="c" style="width:104px"><a>S</a></td><td><a>50S ribosomal protein L24</a></td></tr><tr><td class="c" style="width:104px"><a>T</a></td><td><a>50S ribosomal protein L25</a></td></tr><tr><td class="c" style="width:104px"><a>U</a></td><td><a>50S ribosomal protein L27</a></td></tr><tr><td class="c" style="width:104px"><a>V</a></td><td><a>50S ribosomal protein L28</a></td></tr><tr><td class="c" style="width:104px"><a>W</a></td><td><a>50S ribosomal protein L29</a></td></tr><tr><td class="c" style="width:104px"><a>X</a></td><td><a>50S ribosomal protein L30</a></td></tr><tr><td class="c" style="width:104px"><a>Y</a></td><td><a>50S ribosomal protein L31 type B</a></td></tr><tr><td class="c" style="width:104px"><a>Z</a></td><td><a>50S ribosomal protein L32</a></td></tr></table><table id="t2" style="left:16px;top:453px;width:476px"><tr><th>Non-standard residues in 6s0z #2</th></tr><tr><td><a>ERY</a> <span style="display:inline-block;transform:scaleX(.78);margin:0 -1px 0 -2px">&mdash;</span> <a>erythromycin A</a></td></tr></table><div id="sb"><div></div></div></div>
    <div class="dockbar" style="top:702px;height:46px;border-top:1px solid #b0b0b0">
      <div class="dbtn" style="left:4px;top:8px"><svg width="27" height="27" viewBox="0 0 27 27"><path d="M7.6 7.9 L19.4 19.3 M19.4 7.9 L7.6 19.3" stroke="#fff" stroke-width="3.6" stroke-linecap="butt"/></svg></div>
      <div class="dbtn" style="left:40px;top:8px"><svg width="27" height="27" viewBox="0 0 27 27"><path d="M10.5 9 V7.6 H20.4 V16.6 H18.6" fill="none" stroke="#e0e0e0" stroke-width="1.5"/><rect x="6.6" y="11.4" width="11" height="8.4" fill="none" stroke="#fff" stroke-width="2"/></svg></div>
      <div class="t" style="top:12px">Models</div>
    </div>
    <div id="mtable">
      <div id="mhead">
        <div class="h" style="left:9px">Name</div>
        <div class="v" style="left:400px"></div>
        <div class="h" style="left:409px">ID</div>
        <div class="v" style="left:440px"></div>
        <div class="v" style="left:478px"></div>
        <svg class="abs" style="left:485px;top:5px" width="36" height="20" viewBox="0 0 36 20"><path d="M2 10 C9 1.8 27 1.8 34 10 C27 18.2 9 18.2 2 10 Z" fill="none" stroke="#000" stroke-width="2" stroke-linejoin="round"/><circle cx="18" cy="10" r="6.5" fill="#fff" stroke="#000" stroke-width="1.8"/><circle cx="18" cy="10" r="3.9" fill="#000"/></svg>
        <div class="v" style="left:536px"></div>
        <svg class="abs" style="left:545px;top:-2px" width="30" height="34" viewBox="0 0 30 34"><ellipse cx="13.5" cy="8" rx="8" ry="5.6" fill="#00ee00" stroke="#00a000" stroke-width="1.2"/><path d="M6.2 18.4 L8.4 17.8 L11.8 21.2 L11.8 8.8 Q13.6 7 15.4 9.4 L15.7 16.1 L19.7 16.7 L24.7 18.4 L26.4 21.8 L25.3 31.9 L15.2 31.9 L11.8 28.5 L8.4 22.9 Z" fill="#000"/></svg>
        <div class="v" style="left:990px;width:3px;background:#c0c0c0"></div>
      </div>
      <div class="mrow" style="top:34px"><div class="tri"></div><div class="n">5gmk</div><div class="i">1</div><div class="sw"></div>
        <div class="cb on" style="left:493px"><svg width="28" height="28" viewBox="0 0 28 28"><path d="M7.5 14.5 L12 20 L20.5 7.5" fill="none" stroke="#fff" stroke-width="2.6" stroke-linecap="round" stroke-linejoin="round"/></svg></div>
        <div class="cb off" style="left:551px"></div></div>
      <div class="mrow" style="top:74px"><div class="tri"></div><div class="n">6s0z</div><div class="i">2</div><div class="sw"></div>
        <div class="cb on" style="left:493px"><svg width="28" height="28" viewBox="0 0 28 28"><path d="M7.5 14.5 L12 20 L20.5 7.5" fill="none" stroke="#fff" stroke-width="2.6" stroke-linecap="round" stroke-linejoin="round"/></svg></div>
        <div class="cb off" style="left:551px"></div></div>
    </div>
    <div class="mbtn" style="top:761px">Close</div>
    <div class="mbtn" style="top:809px">Hide</div>
    <div class="mbtn" style="top:857px">Show</div>
    <div class="mbtn" style="top:905px">View</div>
  </div>
  <div class="abs" style="left:756px;top:1151px;width:1152px;height:2px;background:#ababab;z-index:3"></div>
  <div id="cmdrow"><div id="cmdlabel">Command:</div><div id="cmdbox"><div class="sel">open 6s0z format mmCIF fromDatabase pdb</div></div><div id="cmdbtn"><svg width="35" height="40" viewBox="0 0 35 40"><path d="M10.6 16.9 L17.5 23.9 L24.5 16.9" fill="none" stroke="#fff" stroke-width="3" stroke-linecap="round" stroke-linejoin="round"/></svg></div></div>
  <div id="status"><div id="statusbar"></div>
<div class="sbtn" style="left:1770px"><svg width="48" height="48" viewBox="0 0 48 48"><rect x="9" y="9" width="30" height="30" fill="none" stroke="#000" stroke-width="2" stroke-dasharray="2 2"/><rect x="9" y="9" width="14" height="14" fill="#ececec" stroke="#000" stroke-width="2.4"/><path d="M26 26 L34 34" fill="none" stroke="#0a7d1a" stroke-width="2.2" stroke-dasharray="2.5 1.5"/><path d="M30 36 L36 36 L36 30 Z" fill="#0a7d1a"/></svg></div>
<div class="sbtn" style="left:1834px"><svg width="48" height="48" viewBox="0 0 48 48"><rect x="8" y="8" width="32" height="32" fill="#000080"/><path d="M34 14 L25 17 L20 23 L23 25 L14 33 L24 30 L29 26 L26 23 Z" fill="#f5ee10"/></svg></div></div>
</div>
</body>
</html>
